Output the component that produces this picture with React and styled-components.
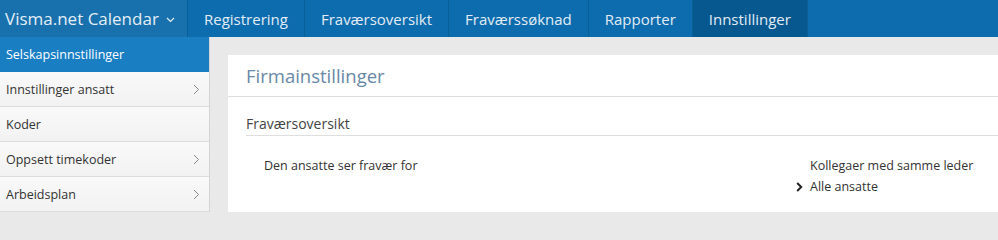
import React from 'react';
import styled, { createGlobalStyle } from 'styled-components';

const Global = createGlobalStyle`
  html, body { margin: 0; padding: 0; background: #e9e9e9; }
  body { font-family: "Open Sans", "Noto Sans", sans-serif; }
`;

const Page = styled.div`
  width: 998px;
  height: 212px;
  overflow: hidden;
  display: flex;
  flex-direction: column;
`;

const Nav = styled.nav`
  height: 37px;
  display: flex;
  background: #0d6cad;
  flex-shrink: 0;
`;

const Brand = styled.div`
  width: 188px;
  display: flex;
  align-items: center;
  padding-left: 5px;
  box-sizing: border-box;
  background: #1871ac;
  color: #e4eef7;
  font-size: 17px;
  border-right: 1px solid #0b5f97;
`;

const BrandCaret = styled.svg`
  margin-left: 7px;
  margin-top: 3px;
`;

const NavItem = styled.div`
  display: flex;
  align-items: center;
  padding: 0 16px;
  color: #e1ecf6;
  font-size: 15px;
  border-right: 1px solid #0b5f97;
  background: ${p => (p.active ? '#07588f' : 'transparent')};
`;

const Body = styled.div`
  flex: 1;
  display: grid;
  grid-template-columns: 210px 1fr;
  min-height: 0;
`;

const Sidebar = styled.ul`
  list-style: none;
  margin: 0;
  padding: 0;
  background: #f5f5f5;
  border-right: 1px solid #d4d4d4;
`;

const SideItem = styled.li`
  height: 35px;
  display: flex;
  align-items: center;
  justify-content: space-between;
  padding: 0 9px 0 6px;
  font-size: 12.5px;
  color: ${p => (p.active ? '#ffffff' : '#333')};
  background: ${p => (p.active ? '#1a7ec3' : 'linear-gradient(#f9f9f9, #f2f2f2)')};
  border-bottom: 1px solid ${p => (p.active ? '#1a7ec3' : '#dcdcdc')};
  box-sizing: border-box;
`;

const Main = styled.main`
  padding: 18px 0 0 18px;
  background: #e9e9e9;
  display: flex;
`;

const Card = styled.section`
  flex: 1;
  background: #fff;
`;

const CardHeader = styled.h1`
  margin: 0;
  height: 41px;
  display: flex;
  align-items: center;
  padding-left: 18px;
  font-size: 18.5px;
  font-weight: 400;
  color: #6888a6;
  border-bottom: 1px solid #dedede;
`;

const Section = styled.div`
  padding: 17px 0 0 18px;
`;

const SectionTitle = styled.h2`
  margin: 0;
  font-size: 14px;
  font-weight: 400;
  color: #444;
  padding-bottom: 2px;
  border-bottom: 1px solid #dedede;
`;

const Row = styled.div`
  display: grid;
  grid-template-columns: 546px 1fr;
  padding: 19px 0 0 18px;
  font-size: 12.5px;
  color: #333;
`;

const Label = styled.div`
  line-height: 21px;
`;

const Options = styled.ul`
  list-style: none;
  margin: 0;
  padding: 0;
`;

const Option = styled.li`
  position: relative;
  line-height: 21px;
`;

const Marker = styled.svg`
  position: absolute;
  left: -14px;
  top: 6px;
`;

const Chevron = () => (
  <svg width="7" height="11" viewBox="0 0 7 11">
    <path d="M1 1l4.5 4.5L1 10" fill="none" stroke="#888" strokeWidth="1" />
  </svg>
);

const sideItems = [
  { label: 'Selskapsinnstillinger', active: true },
  { label: 'Innstillinger ansatt', arrow: true },
  { label: 'Koder' },
  { label: 'Oppsett timekoder', arrow: true },
  { label: 'Arbeidsplan', arrow: true },
];

const navItems = ['Registrering', 'Fraværsoversikt', 'Fraværssøknad', 'Rapporter', 'Innstillinger'];

export default function App() {
  return (
    <Page>
      <Global />
      <Nav>
        <Brand>
          Visma.net Calendar
          <BrandCaret width="9" height="6" viewBox="0 0 9 6">
            <path d="M1 1l3.5 3.5L8 1" fill="none" stroke="#e4eef7" strokeWidth="1.2" />
          </BrandCaret>
        </Brand>
        {navItems.map(n => (
          <NavItem key={n} active={n === 'Innstillinger'}>{n}</NavItem>
        ))}
      </Nav>
      <Body>
        <Sidebar>
          {sideItems.map(s => (
            <SideItem key={s.label} active={s.active}>
              {s.label}
              {s.arrow && <Chevron />}
            </SideItem>
          ))}
        </Sidebar>
        <Main>
          <Card>
            <CardHeader>Firmainstillinger</CardHeader>
            <Section>
              <SectionTitle>Fraværsoversikt</SectionTitle>
              <Row>
                <Label>Den ansatte ser fravær for</Label>
                <Options>
                  <Option>Kollegaer med samme leder</Option>
                  <Option>
                    <Marker width="7" height="10" viewBox="0 0 7 10">
                      <path d="M1.2 1l4 4-4 4" fill="none" stroke="#222" strokeWidth="2" />
                    </Marker>
                    Alle ansatte
                  </Option>
                </Options>
              </Row>
            </Section>
          </Card>
        </Main>
      </Body>
    </Page>
  );
}
